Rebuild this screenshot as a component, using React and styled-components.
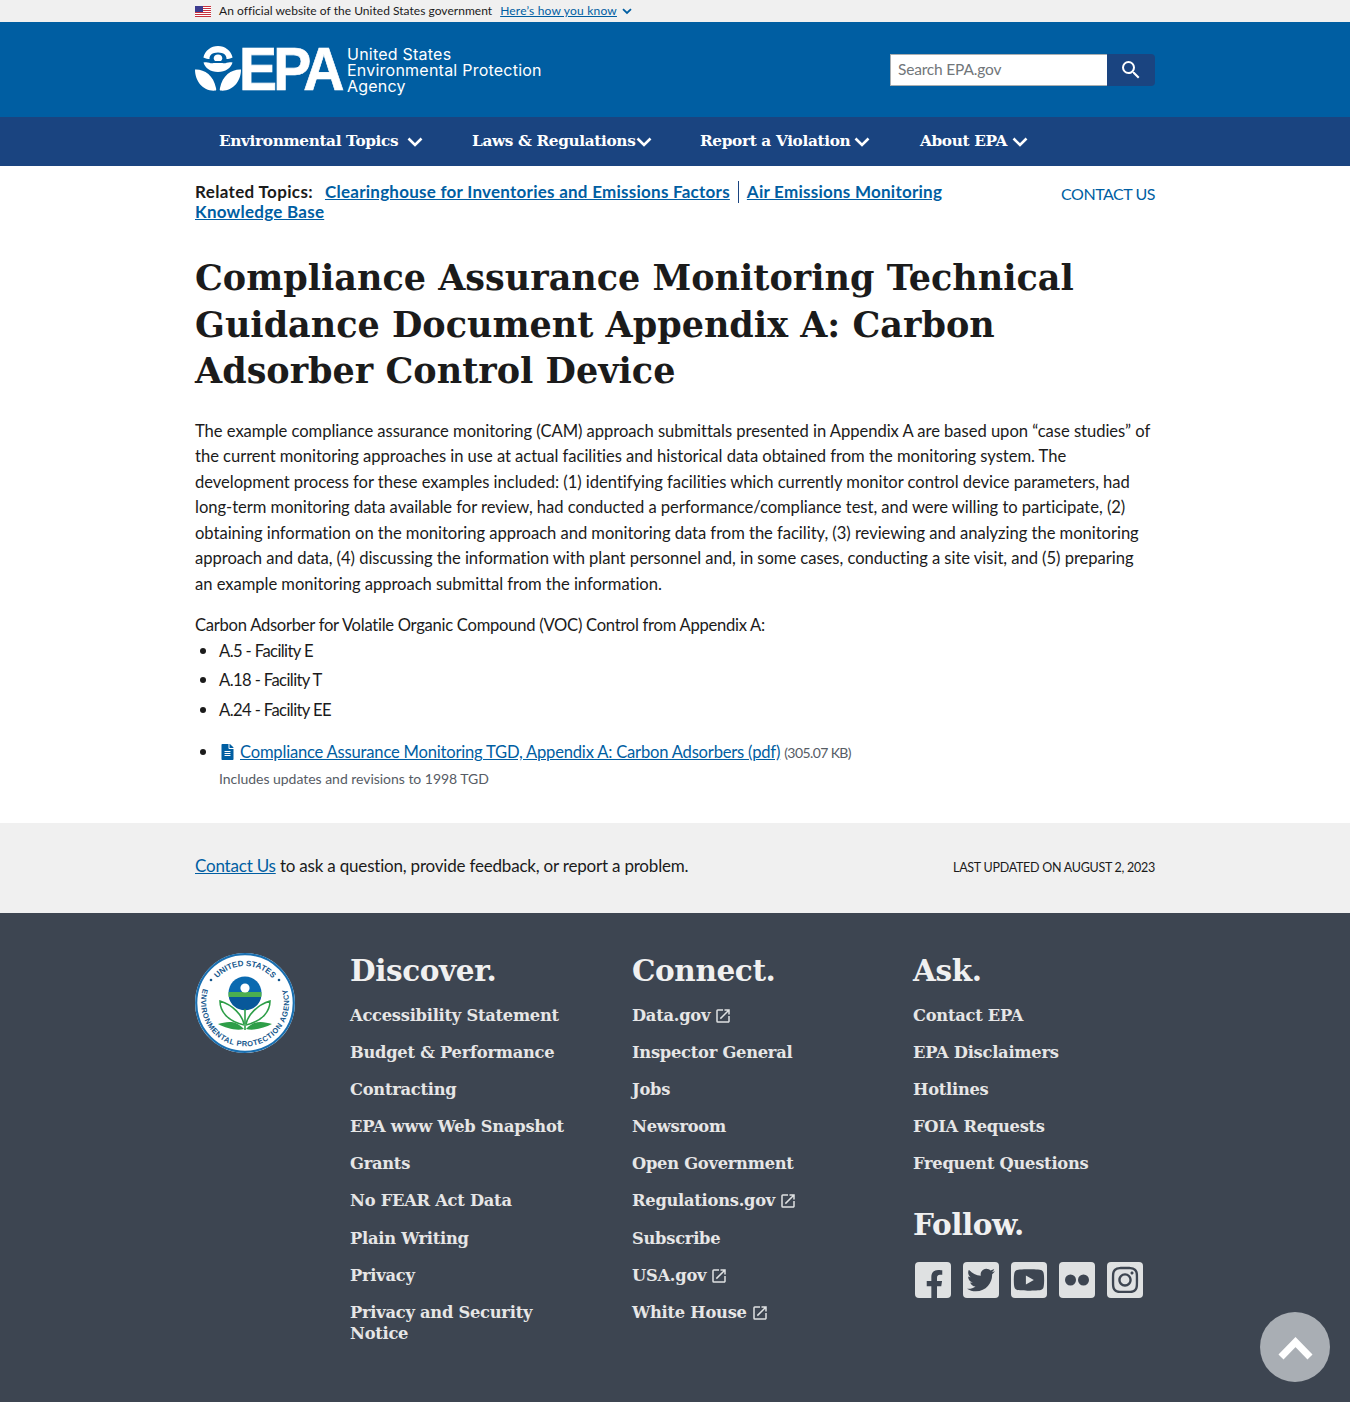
import React from 'react';
import styled, { createGlobalStyle } from 'styled-components';
import { FaFacebookF, FaTwitter, FaYoutube, FaInstagram, FaFileAlt } from 'react-icons/fa';

const SANS = '"Lato", "Open Sans", sans-serif';
const SERIF = '"DejaVu Serif", "Liberation Serif", serif';

const Global = createGlobalStyle`
  html, body { margin: 0; padding: 0; background: #fff; }
  body { font-family: ${SANS}; color: #1b1b1b; font-size: 17px; line-height: 1.5; }
  * { box-sizing: border-box; }
  a { color: #005ea2; }
  li::marker { font-family: "Liberation Sans", sans-serif; font-size: 21px; line-height: 1; }
`;
const Page = styled.div`position: relative; width: 100%; height: 1402px; overflow: hidden;`;
const Wrap = styled.div`width: 960px; margin: 0 auto;`;

const GovBanner = styled.div`height: 22px; background: #f0f0f0; font-size: 12px; line-height: 22px;`;
const GovRow = styled(Wrap)`display: flex; align-items: center;`;
const GovText = styled.span`margin-left: 8px; letter-spacing: 0.03px; color: #1b1b1b;`;
const GovLink = styled.a`margin-left: 8px; letter-spacing: 0.2px; text-decoration: underline;`;
const GovChevron = styled.svg`width: 10px; height: 7px; margin-left: 5px; fill: none; stroke: #005ea2; stroke-width: 1.8;`;

const Header = styled.header`height: 95px; background: #005ea2;`;
const HeaderRow = styled(Wrap)`height: 95px; display: flex; align-items: center; justify-content: space-between;`;
const Logo = styled.div`display: flex; align-items: center; color: #fff; margin-top: -1px;`;
const Emblem = styled.svg`width: 46px; height: 46px; flex: none;`;
const LogoMark = styled.span`
  font-family: "Liberation Sans", Arial, sans-serif; font-weight: 700; font-size: 62px; line-height: 46px;
  letter-spacing: -4.2px; margin-left: -2px; width: 108px; flex: none; transform-origin: left center; transform: scaleX(0.92);
  -webkit-text-stroke: 0.7px #fff;
`;
const LogoName = styled.div`
  font-family: "Inter", "Liberation Sans", sans-serif; font-size: 16px; line-height: 16px; letter-spacing: 0.23px; font-weight: 400; margin-top: 1px;
`;
const Search = styled.div`display: flex; height: 32px; margin-top: 1px;`;
const SearchField = styled.div`
  width: 217px; height: 32px; background: #fff; border: 1px solid #a9aeb1; border-right: 0; padding: 0 7px; color: #71767a;
  font-size: 15.5px; line-height: 29px; letter-spacing: -0.18px;
`;
const SearchBtn = styled.button`
  width: 48px; height: 32px; background: #1a4480; border: 0; border-radius: 0 4px 4px 0; padding: 0; display: flex; align-items: center; justify-content: center;
  svg { width: 24px; height: 24px; fill: #fff; }
`;

const Nav = styled.nav`height: 49px; background: #1a4480;`;
const NavRow = styled(Wrap)`display: flex; height: 49px; align-items: center; padding-left: 24px;`;
const NavItem = styled.div`
  display: flex; align-items: center; color: #fff; font-family: ${SERIF}; font-weight: 700; font-size: 15.3px; letter-spacing: -0.35px;
  line-height: 49px; width: ${p => p.$w}px; flex: none; margin-top: -1px;
`;
const NavChevron = styled.svg`width: 16px; height: 10px; margin-left: ${p => p.$ml}px; fill: none; stroke: #fff; stroke-width: 2.6; margin-top: 2px;`;

const RelatedRow = styled(Wrap)`display: flex; justify-content: space-between; padding-top: 16px;`;
const Related = styled.div`width: 790px; font-size: 17px; line-height: 20px; font-weight: 700;`;
const RelatedLabel = styled.span`margin-right: 12px; letter-spacing: 0.35px;`;
const RelatedLink = styled.a`letter-spacing: 0.25px; text-decoration: underline;`;
const Sep = styled.span`display: inline-block; width: 1px; height: 22px; background: #1a4480; margin: -6px 8px; vertical-align: 1px;`;
const ContactTop = styled.a`font-size: 16px; line-height: 25px; text-decoration: none; letter-spacing: -0.46px; margin-top: -1px;`;

const Main = styled(Wrap)``;
const Title = styled.h1`
  margin: 33px 0 0; font-family: ${SERIF}; font-weight: 700; font-size: 35px; line-height: 46.5px; letter-spacing: 0; color: #1b1b1b;
`;
const Para = styled.p`margin: 24px 0 0; font-size: 16.6px; line-height: 25.5px; letter-spacing: -0.04px;`;
const Lead = styled.p`margin: 16px 0 0; font-size: 16.6px; line-height: 25.5px; letter-spacing: -0.27px;`;
const List = styled.ul`margin: 0; padding-left: 24px; font-size: 16.6px; line-height: 25.5px; letter-spacing: -0.6px;`;
const Item = styled.li`margin-bottom: 4px;`;
const DocList = styled.ul`margin: 17px 0 0; padding-left: 24px; font-size: 16.6px; line-height: 25.5px;`;
const DocLink = styled.a`text-decoration: underline; letter-spacing: -0.21px;`;
const FileIcon = styled(FaFileAlt)`color: #005ea2; width: 13px; height: 16px; margin: 0 6px 0 2px; vertical-align: -2px;`;
const Size = styled.span`font-size: 14px; color: #565c65; margin-left: 4px; letter-spacing: -0.6px;`;
const Note = styled.div`font-size: 14px; color: #565c65; line-height: 25px; letter-spacing: -0.03px;`;

const Feedback = styled.div`height: 90px; margin-top: 32px; background: #f0f0f0;`;
const FeedbackRow = styled(Wrap)`display: flex; justify-content: space-between; align-items: center; height: 90px;`;
const FeedbackText = styled.div`font-size: 17px; letter-spacing: -0.2px; margin-top: -3px; a { text-decoration: underline; }`;
const Updated = styled.div`font-size: 12.5px; text-transform: uppercase; letter-spacing: -0.27px; color: #1b1b1b; margin-top: 2px;`;

const Footer = styled.footer`height: 489px; background: #3d4551;`;
const FooterGrid = styled(Wrap)`display: grid; grid-template-columns: 155px 282px 281px 242px; padding-top: 39px;`;
const Seal = styled.svg`width: 100px; height: 100px; display: block; margin-top: 1px;`;
const Col = styled.div`padding-right: ${p => p.$pr || 0}px;`;
const ColTitle = styled.h2`
  margin: 0; font-family: ${SERIF}; font-weight: 700; font-size: 29.5px; line-height: 37px; color: #f0f0f0; letter-spacing: -0.4px;
  margin-top: ${p => p.$mt || 0}px;
`;
const Links = styled.div`margin-top: 16px;`;
const FootLink = styled.div`
  font-family: ${SERIF}; font-weight: 700; font-size: 16.3px; line-height: 21px; letter-spacing: -0.25px; color: #e6e6e6; margin-bottom: 16.2px;
`;
const Launch = styled.svg`width: 18px; height: 18px; fill: #dfe1e2; margin-left: 4px; vertical-align: -4px;`;
const Socials = styled.div`display: flex; gap: 12px; margin: 19px 0 0 2px;`;
const Social = styled.div`
  width: 36px; height: 36px; flex: none; border-radius: 4px; background: #dfe1e2; color: #3d4551; display: flex; align-items: center; justify-content: center; overflow: hidden;
`;
const ToTop = styled.div`
  position: absolute; left: 1260px; top: 1312px; width: 70px; height: 70px; border-radius: 50%; background: #a9aeb4;
  svg { width: 70px; height: 70px; display: block; fill: none; stroke: #fff; stroke-width: 7; }
`;

const launchPath = 'M19 19H5V5h7V3H5a2 2 0 0 0-2 2v14a2 2 0 0 0 2 2h14c1.1 0 2-.9 2-2v-7h-2v7zM14 3v2h3.59l-9.83 9.83 1.41 1.41L19 6.41V10h2V3h-7z';
const Ext = () => <Launch viewBox="0 0 24 24"><path d={launchPath} /></Launch>;
const Chevron = ({ ml }) => <NavChevron $ml={ml} viewBox="0 0 16 10"><path d="M1.500 1.500 8 8l6.500-6.500" /></NavChevron>;

const Flag = () => (
  <svg width="16" height="11" viewBox="0 0 16 11" style={{ flex: 'none' }}>
    <rect width="16" height="11" fill="#fff" />
    {[0, 2, 4, 6, 8, 10].map(y => <rect key={y} y={y} width="16" height="1" fill="#c8313e" />)}
    <rect width="8" height="6" fill="#3c3b8e" />
  </svg>
);

const discover = ['Accessibility Statement', 'Budget & Performance', 'Contracting', 'EPA www Web Snapshot', 'Grants', 'No FEAR Act Data', 'Plain Writing', 'Privacy', 'Privacy and Security Notice'];
const connect = [['Data.gov', 1], ['Inspector General'], ['Jobs'], ['Newsroom'], ['Open Government'], ['Regulations.gov', 1], ['Subscribe'], ['USA.gov', 1], ['White House', 1]];
const ask = ['Contact EPA', 'EPA Disclaimers', 'Hotlines', 'FOIA Requests', 'Frequent Questions'];

export default function App() {
  return (
    <Page>
      <Global />
      <GovBanner>
        <GovRow>
          <Flag />
          <GovText>An official website of the United States government</GovText>
          <GovLink>Here’s how you know</GovLink>
          <GovChevron viewBox="0 0 10 7"><path d="M1 1.200 5 5l4-3.800" /></GovChevron>
        </GovRow>
      </GovBanner>
      <Header>
        <HeaderRow>
          <Logo>
            <Emblem viewBox="0 0 46 46">
              <path fill="#fff" d="M23 0c7 0 13 4.600 14.600 11.500C35 12.600 33 13 31.500 13c.2-3.600-2.700-6.400-8.500-6.400S14.300 9.400 14.500 13C13 13 11 12.600 8.400 11.500 10 4.600 16 0 23 0z" />
              <path fill="#fff" d="M23 8.500c2.500 0 4.300 1.700 4.300 3.700 0 1.200-.6 2.100-1.500 2.800h-5.600c-.9-.7-1.500-1.600-1.500-2.800 0-2 1.800-3.700 4.300-3.700z" />
              <path fill="#fff" d="M8.500 16.500c2.200-.5 4-.4 5.800.3 1.500.6 3 .8 4.300.2l4.400-.1 4.400.1c1.300.6 2.800.4 4.300-.2 1.800-.7 3.600-.8 5.800-.3C36 22 30.500 26 23 26S10 22 8.500 16.500z" />
              <path fill="#fff" d="M0 23.500C9 23 18.500 29 21 42c.2 1 .4 1.500 0 2.500C9 46 0 36 0 23.500z" />
              <path fill="#fff" d="M46 23.500C37 23 27.500 29 25 42c-.2 1-.4 1.500 0 2.500C37 46 46 36 46 23.500z" />
            </Emblem>
            <LogoMark>EPA</LogoMark>
            <LogoName>United States<br />Environmental Protection<br />Agency</LogoName>
          </Logo>
          <Search>
            <SearchField>Search EPA.gov</SearchField>
            <SearchBtn aria-label="Search">
              <svg viewBox="0 0 24 24"><path d="M15.500 14h-.79l-.28-.27A6.471 6.471 0 0 0 16 9.500 6.500 6.500 0 1 0 9.500 16c1.610 0 3.090-.59 4.230-1.570l.27.28v.79l5 4.990L20.490 19l-4.990-5zm-6 0C7.010 14 5 11.990 5 9.500S7.010 5 9.500 5 14 7.010 14 9.500 11.990 14 9.500 14z" /></svg>
            </SearchBtn>
          </Search>
        </HeaderRow>
      </Header>
      <Nav>
        <NavRow>
          <NavItem $w={253}>Environmental Topics<Chevron ml={9} /></NavItem>
          <NavItem $w={228}>Laws &amp; Regulations<Chevron ml={1} /></NavItem>
          <NavItem $w={220}>Report a Violation<Chevron ml={4} /></NavItem>
          <NavItem $w={150}>About EPA<Chevron ml={5} /></NavItem>
        </NavRow>
      </Nav>
      <RelatedRow>
        <Related>
          <RelatedLabel>Related Topics:</RelatedLabel>
          <RelatedLink>Clearinghouse for Inventories and Emissions Factors</RelatedLink>
          <Sep />
          <RelatedLink>Air Emissions Monitoring Knowledge Base</RelatedLink>
        </Related>
        <ContactTop>CONTACT US</ContactTop>
      </RelatedRow>
      <Main>
        <Title>Compliance Assurance Monitoring Technical Guidance Document Appendix A: Carbon Adsorber Control Device</Title>
        <Para>The example compliance assurance monitoring (CAM) approach submittals presented in Appendix A are based upon “case studies” of the current monitoring approaches in use at actual facilities and historical data obtained from the monitoring system. The development process for these examples included: (1) identifying facilities which currently monitor control device parameters, had long-term monitoring data available for review, had conducted a performance/compliance test, and were willing to participate, (2) obtaining information on the monitoring approach and monitoring data from the facility, (3) reviewing and analyzing the monitoring approach and data, (4) discussing the information with plant personnel and, in some cases, conducting a site visit, and (5) preparing an example monitoring approach submittal from the information.</Para>
        <Lead>Carbon Adsorber for Volatile Organic Compound (VOC) Control from Appendix A:</Lead>
        <List>
          <Item>A.5 - Facility E</Item>
          <Item>A.18 - Facility T</Item>
          <Item>A.24 - Facility EE</Item>
        </List>
        <DocList>
          <li>
            <FileIcon />
            <DocLink>Compliance Assurance Monitoring TGD, Appendix A: Carbon Adsorbers (pdf)</DocLink>
            <Size>(305.07 KB)</Size>
            <Note>Includes updates and revisions to 1998 TGD</Note>
          </li>
        </DocList>
      </Main>
      <Feedback>
        <FeedbackRow>
          <FeedbackText><a>Contact Us</a> to ask a question, provide feedback, or report a problem.</FeedbackText>
          <Updated>Last updated on August 2, 2023</Updated>
        </FeedbackRow>
      </Feedback>
      <Footer>
        <FooterGrid>
          <div>
            <Seal viewBox="0 0 100 100">
              <defs>
                <path id="sealTop" d="M13 50a37 37 0 0 1 74 0" />
                <path id="sealFull" d="M10.500 30A44 44 0 1 0 89.500 30" />
              </defs>
              <circle cx="50" cy="50" r="50" fill="#fff" />
              <circle cx="50" cy="50" r="48.800" fill="none" stroke="#1a6fb0" strokeWidth="2.200" />
              <text fontFamily="Liberation Sans, sans-serif" fontWeight="700" fontSize="8" fill="#14568c">
                <textPath href="#sealTop" startOffset="50%" textAnchor="middle">UNITED STATES</textPath>
              </text>
              <text fontFamily="Liberation Sans, sans-serif" fontWeight="700" fontSize="7.500" fill="#14568c" letterSpacing="0.5">
                <textPath href="#sealFull" startOffset="50%" textAnchor="middle">ENVIRONMENTAL PROTECTION AGENCY</textPath>
              </text>
              <circle cx="16" cy="27" r="1.300" fill="#14568c" />
              <circle cx="84" cy="27" r="1.300" fill="#14568c" />
              <circle cx="50" cy="40" r="16.500" fill="#0a6ab0" />
              <path d="M33.700 39h32.600a16.500 16.500 0 0 1 .1 5H33.600a16.500 16.500 0 0 1 .1-5z" fill="#4caf50" />
              <path d="M33.800 44h32.400a16.500 16.500 0 0 1-32.400 0z" fill="#08589a" />
              <circle cx="50" cy="35" r="4.600" fill="#fff" />
              <path d="M50 56v21" stroke="#2e9e48" strokeWidth="1.600" />
              <path d="M49 76C41 78 31 75 23 71c8-2 17-5 26 5zM51 76c8 2 18-1 26-5-8-2-17-5-26 5z" fill="#2e9e48" />
              <path d="M49 71C47 62 38 52 25 48c0 10 7 20 24 24M51 71c2-9 11-19 24-23 0 10-7 20-24 24" fill="none" stroke="#2e9e48" strokeWidth="1.600" />
            </Seal>
          </div>
          <Col $pr={42}>
            <ColTitle>Discover.</ColTitle>
            <Links>{discover.map(d => <FootLink key={d}>{d}</FootLink>)}</Links>
          </Col>
          <Col $pr={30}>
            <ColTitle>Connect.</ColTitle>
            <Links>{connect.map(([t, e]) => <FootLink key={t}>{t}{e && <Ext />}</FootLink>)}</Links>
          </Col>
          <Col>
            <ColTitle>Ask.</ColTitle>
            <Links>{ask.map(d => <FootLink key={d}>{d}</FootLink>)}</Links>
            <ColTitle $mt={32}>Follow.</ColTitle>
            <Socials>
              <Social><FaFacebookF size={29} style={{ marginTop: 8, marginLeft: 3 }} /></Social>
              <Social><FaTwitter size={28} /></Social>
              <Social><FaYoutube size={32} /></Social>
              <Social>
                <svg width="26" height="12" viewBox="0 0 26 12"><circle cx="6.500" cy="6" r="5.500" fill="#3d4551" /><circle cx="19.500" cy="6" r="5.500" fill="#3d4551" /></svg>
              </Social>
              <Social><FaInstagram size={30} /></Social>
            </Socials>
          </Col>
        </FooterGrid>
      </Footer>
      <ToTop>
        <svg viewBox="0 0 70 70"><path d="M21 45 35.500 30 50 45" /></svg>
      </ToTop>
    </Page>
  );
}
